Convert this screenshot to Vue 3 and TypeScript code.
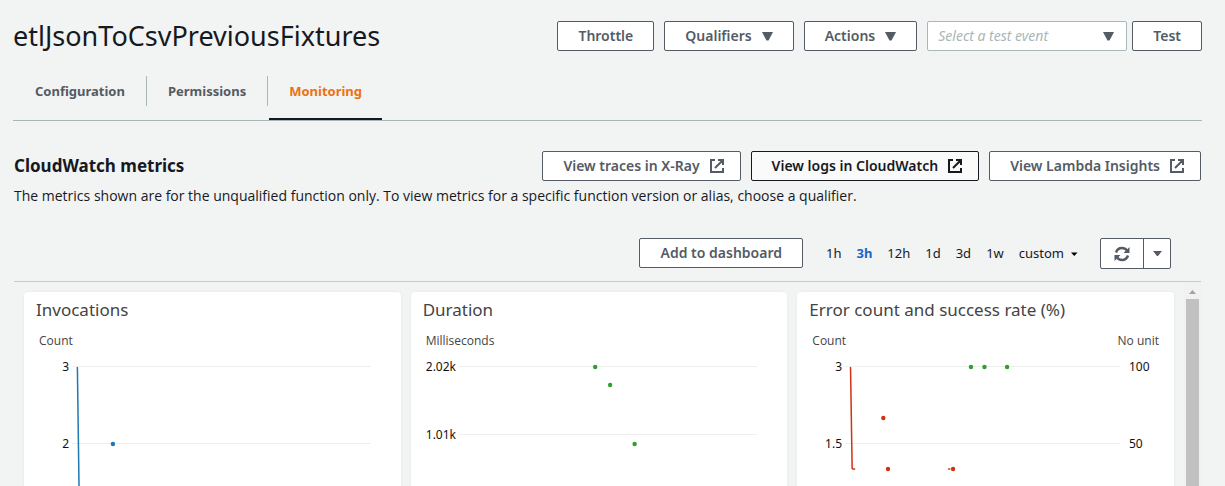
<script setup lang="ts">
import { ref } from 'vue'

interface Tick { label: string; y: number }
interface Dot { x: number; y: number; color: string }
interface Segment { x1: number; y1: number; x2: number; y2: number; color: string }
interface Chart {
  title: string
  unit: string
  rightUnit?: string
  ticks: Tick[]
  rightTicks: Tick[]
  dots: Dot[]
  segments: Segment[]
}

const blue = '#1f77b4'
const green = '#2ca02c'
const red = '#d13212'

// x is a percentage of the plotted time span, y a distance from the plot's top
const charts: Chart[] = [
  {
    title: 'Invocations',
    unit: 'Count',
    ticks: [{ label: '3', y: 7 }, { label: '2', y: 84 }],
    rightTicks: [],
    dots: [{ x: 13.7, y: 84, color: blue }],
    segments: [{ x1: 1.8, y1: 7, x2: 2.5, y2: 160, color: blue }],
  },
  {
    title: 'Duration',
    unit: 'Milliseconds',
    ticks: [{ label: '2.02k', y: 7 }, { label: '1.01k', y: 75 }],
    rightTicks: [],
    dots: [
      { x: 45.6, y: 7, color: green },
      { x: 50.6, y: 25, color: green },
      { x: 58.8, y: 84, color: green },
    ],
    segments: [],
  },
  {
    title: 'Error count and success rate (%)',
    unit: 'Count',
    rightUnit: 'No unit',
    ticks: [{ label: '3', y: 7 }, { label: '1.5', y: 84 }],
    rightTicks: [{ label: '100', y: 7 }, { label: '50', y: 84 }],
    dots: [
      { x: 45.7, y: 7, color: green },
      { x: 50.6, y: 7, color: green },
      { x: 58.8, y: 7, color: green },
      { x: 13.9, y: 58, color: red },
      { x: 15.6, y: 109, color: red },
      { x: 39.2, y: 109, color: red },
    ],
    segments: [
      { x1: 2, y1: 7, x2: 2.6, y2: 109, color: red },
      { x1: 2.6, y1: 109, x2: 3.7, y2: 109, color: red },
      { x1: 37.4, y1: 109, x2: 38.2, y2: 109, color: red },
    ],
  },
]

const tabs = ['Configuration', 'Permissions', 'Monitoring']
const activeTab = ref('Monitoring')
const ranges = ['1h', '3h', '12h', '1d', '3d', '1w']
const activeRange = ref('3h')
const links = ['View traces in X-Ray', 'View logs in CloudWatch', 'View Lambda Insights']
const testEvent = ref('')
</script>

<template>
  <main class="page">
    <header class="header">
      <h1>etlJsonToCsvPreviousFixtures</h1>
      <div class="actions">
        <button class="btn" type="button">Throttle</button>
        <button v-for="name in ['Qualifiers', 'Actions']" :key="name" class="btn" type="button">
          {{ name }}
          <svg class="arrow" width="11" height="9" viewBox="0 0 11 9" aria-hidden="true"><path d="M0 0h11L6.500 8.500h-2z" /></svg>
        </button>
        <div class="test">
          <div class="select-box">
            <select v-model="testEvent" aria-label="Test event">
              <option value="">Select a test event</option>
            </select>
            <svg class="arrow" width="11" height="9" viewBox="0 0 11 9" aria-hidden="true"><path d="M0 0h11L6.500 8.500h-2z" /></svg>
          </div>
          <button class="btn" type="button">Test</button>
        </div>
      </div>
    </header>

    <nav class="tabs">
      <button
        v-for="tab in tabs"
        :key="tab"
        type="button"
        class="tab"
        :class="{ active: tab === activeTab }"
        @click="activeTab = tab"
      ><span>{{ tab }}</span></button>
    </nav>

    <section class="metrics">
      <div class="metrics-head">
        <h2>CloudWatch metrics</h2>
        <div class="links">
          <a v-for="(link, i) in links" :key="link" href="#" class="btn" :class="{ hovered: i === 1 }">
            {{ link }}
            <svg class="external" width="14" height="14" viewBox="0 0 14 14" aria-hidden="true">
              <path d="M5 1H1v12h12V9M8 1h5v5M13 1L5 9" />
            </svg>
          </a>
        </div>
      </div>
      <p>The metrics shown are for the unqualified function only. To view metrics for a specific function version or alias, choose a qualifier.</p>

      <div class="toolbar">
        <button class="btn" type="button">Add to dashboard</button>
        <div class="ranges">
          <button
            v-for="range in ranges"
            :key="range"
            type="button"
            class="range"
            :class="{ active: range === activeRange }"
            @click="activeRange = range"
          >{{ range }}</button>
          <button type="button" class="range custom">
            custom
            <svg width="7" height="5" viewBox="0 0 7 5" aria-hidden="true"><path d="M0 1.500h6.500L3.250 5z" /></svg>
          </button>
        </div>
        <div class="refresh">
          <button type="button" class="reload" aria-label="Refresh">
            <svg width="16" height="16" viewBox="0 0 16 16" aria-hidden="true">
              <path class="stroke" d="M2 6.500C3 3.500 5.300 2 8 2c2 0 3.800.9 5 2.500M14 9.500C13 12.500 10.700 14 8 14c-2 0-3.800-.9-5-2.500" />
              <path d="M15.500 1v6h-6zM.5 15V9h6z" />
            </svg>
          </button>
          <button type="button" class="more" aria-label="Refresh options">
            <svg width="9" height="5" viewBox="0 0 9 5" aria-hidden="true"><path d="M0 0h9L5 5H4z" /></svg>
          </button>
        </div>
      </div>
    </section>

    <section class="dashboard">
      <div class="cards">
        <article v-for="chart in charts" :key="chart.title" class="card">
          <h3>{{ chart.title }}</h3>
          <div class="units">
            <span>{{ chart.unit }}</span>
            <span v-if="chart.rightUnit">{{ chart.rightUnit }}</span>
          </div>
          <div class="chart">
            <svg class="axis" width="48" height="240">
              <text v-for="t in chart.ticks" :key="t.label" x="45" :y="t.y + 4" text-anchor="end">{{ t.label }}</text>
            </svg>
            <svg class="plot" height="240">
              <line v-for="t in chart.ticks" :key="t.label" class="grid" x1="0" x2="100%" :y1="t.y - 0.5" :y2="t.y - 0.5" />
              <line
                v-for="(s, i) in chart.segments"
                :key="'s' + i"
                :x1="s.x1 + '%'" :y1="s.y1" :x2="s.x2 + '%'" :y2="s.y2"
                :stroke="s.color" stroke-width="1.5"
              />
              <circle v-for="(d, i) in chart.dots" :key="'d' + i" :cx="d.x + '%'" :cy="d.y" r="2.2" :fill="d.color" />
            </svg>
            <svg class="axis" :width="chart.rightTicks.length ? 53 : 30" height="240">
              <text v-for="t in chart.rightTicks" :key="t.label" x="8" :y="t.y + 4">{{ t.label }}</text>
            </svg>
          </div>
        </article>
      </div>
      <div class="scrollbar" aria-hidden="true">
        <svg width="7" height="4" viewBox="0 0 7 4"><path d="M0 4h7L3.500 0z" /></svg>
        <div class="thumb"></div>
      </div>
    </section>
  </main>
</template>

<style>
body {
  background: #f2f3f3;
}
</style>

<style scoped>
.page {
  box-sizing: border-box;
  display: flex;
  flex-direction: column;
  height: 100vh;
  overflow: hidden;
  padding: 0 23px 0 13px;
  background: #f2f3f3;
  color: #16191f;
  font-family: "Noto Sans", "Open Sans", sans-serif;
  font-size: 13px;
  line-height: 20px;
}
h1, h2, h3, p {
  margin: 0;
}
button, select {
  font: inherit;
  color: inherit;
}
button {
  cursor: pointer;
}
.header {
  display: flex;
  flex-shrink: 0;
  align-items: center;
  justify-content: space-between;
  height: 72px;
}
h1 {
  font-size: 27px;
  font-weight: 400;
  line-height: 36px;
}
.actions, .links {
  display: flex;
  gap: 10px;
}
.btn {
  box-sizing: border-box;
  display: inline-flex;
  align-items: center;
  justify-content: center;
  gap: 10px;
  height: 30px;
  padding: 0 20px;
  border: 1px solid #545b64;
  border-radius: 2px;
  background: #fff;
  color: #545b64;
  font-size: 14px;
  font-weight: 600;
  text-decoration: none;
  white-space: nowrap;
}
.links .btn {
  padding-right: 16px;
}
.btn.hovered {
  border-color: #16191f;
  background: #fafafa;
  color: #16191f;
}
.arrow {
  fill: #545b64;
}
.external {
  fill: none;
  stroke: currentColor;
  stroke-width: 2;
}
.test {
  display: flex;
  gap: 5px;
}
.select-box {
  position: relative;
  width: 200px;
}
.select-box select {
  box-sizing: border-box;
  width: 100%;
  height: 30px;
  padding: 0 10px;
  border: 1px solid #aab7b8;
  border-radius: 2px;
  background: #fff;
  color: #aab7b8;
  font-size: 14px;
  font-style: italic;
  appearance: none;
}
.select-box .arrow {
  position: absolute;
  top: 11px;
  right: 13px;
  pointer-events: none;
}
.tabs {
  display: flex;
  flex-shrink: 0;
  align-items: flex-start;
  height: 48px;
  padding-left: 1px;
  border-bottom: 1px solid #aab7b8;
}
.tab {
  box-sizing: border-box;
  display: flex;
  align-items: flex-start;
  height: 48px;
  padding: 4px 0 0;
  border: 0;
  background: none;
  color: #545b64;
  font-weight: 700;
}
.tab span {
  padding: 5px 21px;
  border-right: 1px solid #aab7b8;
}
.tab.active {
  margin-left: 1px;
  border-bottom: 2px solid #16191f;
  color: #ec7211;
}
.tab.active span {
  padding: 5px 20px;
  border-right: 0;
}
.metrics {
  flex-shrink: 0;
  padding: 30px 1px 12px;
}
.metrics-head {
  display: flex;
  align-items: center;
  justify-content: space-between;
}
h2 {
  font-size: 17px;
  font-weight: 700;
  line-height: 24px;
}
p {
  margin-top: 5px;
  font-family: "Open Sans", "Noto Sans", sans-serif;
  font-size: 14px;
}
.toolbar {
  display: flex;
  align-items: flex-start;
  justify-content: flex-end;
  margin-top: 32px;
  padding-right: 30px;
}
.ranges {
  display: flex;
  gap: 15px;
  margin: 5px 22px 0 23px;
}
.range {
  padding: 0;
  border: 0;
  background: none;
}
.range.active {
  color: #1e66c9;
  font-weight: 700;
}
.custom {
  display: flex;
  align-items: center;
  gap: 7px;
}
.refresh {
  display: flex;
  box-sizing: border-box;
  height: 31px;
  border: 1px solid #545b64;
  border-radius: 2px;
  background: #fff;
  fill: #545b64;
}
.refresh button {
  display: flex;
  align-items: center;
  justify-content: center;
  padding: 0;
  border: 0;
  background: none;
}
.refresh .reload {
  width: 42px;
}
.refresh .more {
  width: 27px;
  border-left: 1px solid #545b64;
}
.stroke {
  fill: none;
  stroke: #545b64;
  stroke-width: 2.5;
}
.dashboard {
  display: flex;
  flex: 1;
  min-height: 0;
  overflow: hidden;
  margin: 0 1px;
  border-top: 1px solid #c6caca;
}
.cards {
  display: grid;
  flex: 1;
  grid-template-columns: repeat(3, minmax(0, 1fr));
  gap: 10px;
  padding: 10px;
}
.card {
  height: max-content;
  border-radius: 4px;
  background: #fff;
  box-shadow: 0 0 3px rgba(0, 0, 0, 0.06);
}
h3 {
  padding: 6px 12px 0;
  color: #444;
  font-size: 17px;
  font-weight: 400;
  line-height: 24px;
}
.units {
  display: flex;
  justify-content: space-between;
  padding: 9px 15px;
  color: #444;
  font-family: "Open Sans", "Noto Sans", sans-serif;
  font-size: 12px;
}
.chart {
  display: flex;
}
.axis {
  flex-shrink: 0;
  overflow: visible;
  font-size: 12px;
  fill: #111;
}
.plot {
  flex: 1;
  min-width: 0;
}
.grid {
  stroke: #eee;
}
.scrollbar {
  display: flex;
  flex-direction: column;
  align-items: center;
  gap: 5px;
  width: 17px;
  padding-top: 8px;
  background: #f1f1f1;
  fill: #a3a3a3;
}
.scrollbar svg {
  flex-shrink: 0;
}
.thumb {
  flex: 1;
  width: 13px;
  background: #c1c1c1;
}
</style>
